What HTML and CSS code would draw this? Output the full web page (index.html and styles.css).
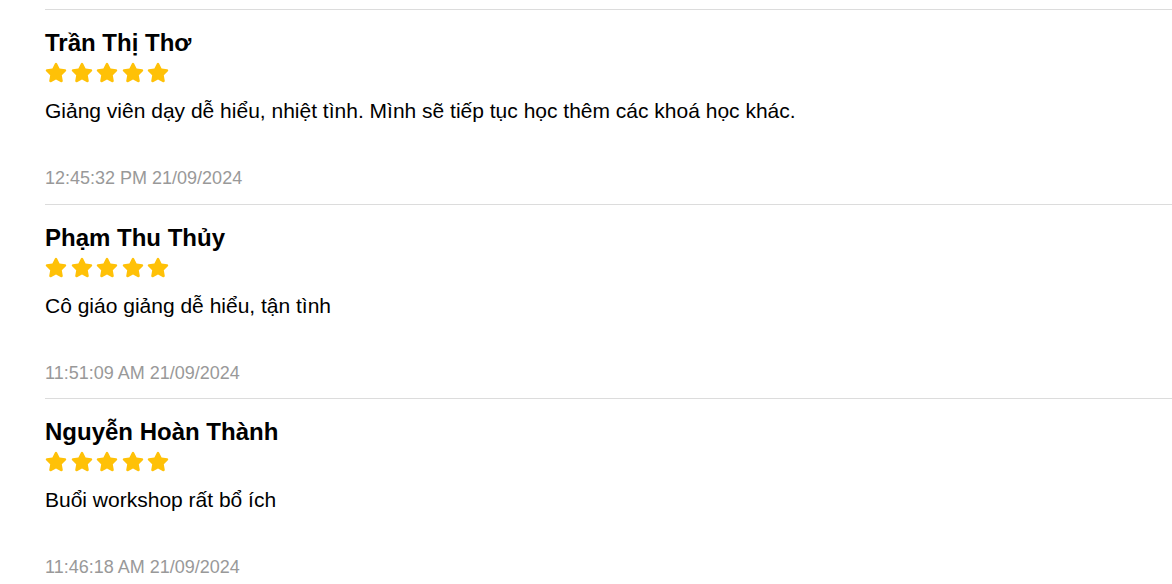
FILE: index.html
```html
<!DOCTYPE html>
<html lang="vi">
<head>
<meta charset="utf-8">
<title>Đánh giá</title>
<link rel="stylesheet" href="styles.css">
</head>
<body>
<svg class="defs" width="0" height="0" aria-hidden="true">
  <symbol id="star" viewBox="0 0 576 512">
    <path d="M259.3 17.8L194 150.2 47.9 171.5c-26.2 3.8-36.7 36.1-17.7 54.6l105.7 103-25 145.5c-4.5 26.3 23.2 46 46.4 33.7L288 439.6l130.7 68.7c23.2 12.2 50.9-7.4 46.4-33.7l-25-145.5 105.7-103c19-18.5 8.5-50.8-17.7-54.6L382 150.2 316.7 17.8c-11.7-23.6-45.6-23.9-57.4 0z"/>
  </symbol>
</svg>
<div class="reviews">
  <div class="review">
    <div class="name">Trần Thị Thơ</div>
    <div class="stars">
      <svg class="star"><use href="#star"/></svg>
      <svg class="star"><use href="#star"/></svg>
      <svg class="star"><use href="#star"/></svg>
      <svg class="star"><use href="#star"/></svg>
      <svg class="star"><use href="#star"/></svg>
    </div>
    <div class="comment">Giảng viên dạy dễ hiểu, nhiệt tình. Mình sẽ tiếp tục học thêm các khoá học khác.</div>
    <div class="time">12:45:32 PM 21/09/2024</div>
  </div>
  <div class="review">
    <div class="name">Phạm Thu Thủy</div>
    <div class="stars">
      <svg class="star"><use href="#star"/></svg>
      <svg class="star"><use href="#star"/></svg>
      <svg class="star"><use href="#star"/></svg>
      <svg class="star"><use href="#star"/></svg>
      <svg class="star"><use href="#star"/></svg>
    </div>
    <div class="comment">Cô giáo giảng dễ hiểu, tận tình</div>
    <div class="time">11:51:09 AM 21/09/2024</div>
  </div>
  <div class="review">
    <div class="name">Nguyễn Hoàn Thành</div>
    <div class="stars">
      <svg class="star"><use href="#star"/></svg>
      <svg class="star"><use href="#star"/></svg>
      <svg class="star"><use href="#star"/></svg>
      <svg class="star"><use href="#star"/></svg>
      <svg class="star"><use href="#star"/></svg>
    </div>
    <div class="comment">Buổi workshop rất bổ ích</div>
    <div class="time">11:46:18 AM 21/09/2024</div>
  </div>
</div>
</body>
</html>
```

FILE: styles.css
```css
html, body {
  margin: 0;
  padding: 0;
  background: #fff;
}
body {
  font-family: Arial, "Liberation Sans", sans-serif;
  color: #000;
  overflow: hidden;
}
.defs {
  position: absolute;
  width: 0;
  height: 0;
}
.reviews {
  padding: 9px 0 0 45px;
}
.review {
  border-top: 1px solid #dcdcdc;
  padding: 19px 0 15.5px;
}
.name {
  font-size: 24px;
  font-weight: bold;
  line-height: 28px;
}
.stars {
  display: flex;
  gap: 3.5px;
  margin-top: 5px;
  height: 21px;
}
.star {
  width: 22px;
  height: 21px;
  fill: #ffc107;
}
.comment {
  font-size: 21px;
  line-height: 24px;
  margin-top: 16px;
}
.time {
  font-size: 18px;
  line-height: 20px;
  color: #999;
  margin-top: 45px;
}
```
